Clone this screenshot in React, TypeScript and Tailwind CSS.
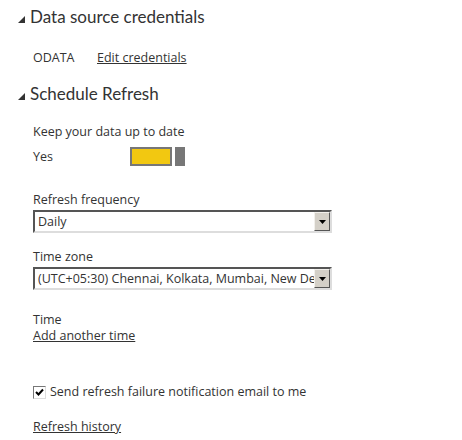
import { useState } from 'react';

function Caret() {
  return (
    <svg width="7" height="7" viewBox="0 0 7 7" className="mr-[5px] mt-[5px]">
      <polygon points="7,0 7,7 0,7" fill="#333" />
    </svg>
  );
}

function Select({ value }: { value: string }) {
  return (
    <div className="flex h-[23px] w-[299px] border-[2px] border-t-[#555] border-l-[#555] border-b-[#ddd] border-r-[#ddd] bg-white">
      <div className="flex-1 overflow-hidden whitespace-nowrap pl-[3px] text-[12.5px] leading-[19px] text-[#333]">
        {value}
      </div>
      <div className="flex h-[19px] w-[16px] items-center justify-center border border-t-[#f2f0ec] border-l-[#f2f0ec] border-b-[#555] border-r-[#555] bg-[#d4d0c8]">
        <svg width="7" height="4" viewBox="0 0 7 4">
          <polygon points="0,0 7,0 3.5,4" fill="#000" />
        </svg>
      </div>
    </div>
  );
}

export default function App() {
  const [notify, setNotify] = useState(true);

  return (
    <div
      className="h-[440px] w-[462px] bg-white text-[#333]"
      style={{ fontFamily: '"Segoe UI", "Open Sans", sans-serif' }}
    >
      {/* Data source credentials */}
      <div className="flex items-center pl-[18px] pt-[5px]">
        <Caret />
        <h2 className="text-[17px] leading-[24px] font-normal" style={{ fontFamily: 'Lato, sans-serif' }}>
          Data source credentials
        </h2>
      </div>
      <div className="mt-[21px] flex pl-[33px] text-[12.5px] leading-[16px]">
        <span className="w-[64px]">ODATA</span>
        <a className="underline">Edit credentials</a>
      </div>

      {/* Schedule Refresh */}
      <div className="mt-[16px] flex items-center pl-[18px]">
        <Caret />
        <h2 className="text-[17px] leading-[24px] font-normal" style={{ fontFamily: 'Lato, sans-serif' }}>
          Schedule Refresh
        </h2>
      </div>

      <div className="pl-[33px] text-[12.5px] leading-[16px]">
        <div className="mt-[18px]">Keep your data up to date</div>
        <div className="mt-[7px] flex items-center">
          <span className="w-[97px]">Yes</span>
          <div className="flex gap-[3px]">
            <div className="h-[19px] w-[42px] border-[2px] border-[#777] bg-[#f2c811]" />
            <div className="h-[19px] w-[10px] bg-[#777]" />
          </div>
        </div>

        <div className="mt-[26px]">Refresh frequency</div>
        <div className="mt-[2px]">
          <Select value="Daily" />
        </div>

        <div className="mt-[16px]">Time zone</div>
        <div className="mt-[2px]">
          <Select value="(UTC+05:30) Chennai, Kolkata, Mumbai, New Delhi" />
        </div>

        <div className="mt-[22px]">Time</div>
        <a className="block underline">Add another time</a>

        <label className="mt-[40px] flex items-center gap-[4px]" onClick={() => setNotify(!notify)}>
          <span className="flex h-[13px] w-[13px] items-center justify-center border border-t-[#777] border-l-[#777] border-b-[#ddd] border-r-[#ddd] bg-white">
            {notify && (
              <svg width="9" height="9" viewBox="0 0 9 9">
                <path d="M1 4 L3.5 6.5 L8 1.5" stroke="#000" strokeWidth="2" fill="none" />
              </svg>
            )}
          </span>
          <span>Send refresh failure notification email to me</span>
        </label>

        <a className="mt-[19px] block underline">Refresh history</a>
      </div>
    </div>
  );
}
